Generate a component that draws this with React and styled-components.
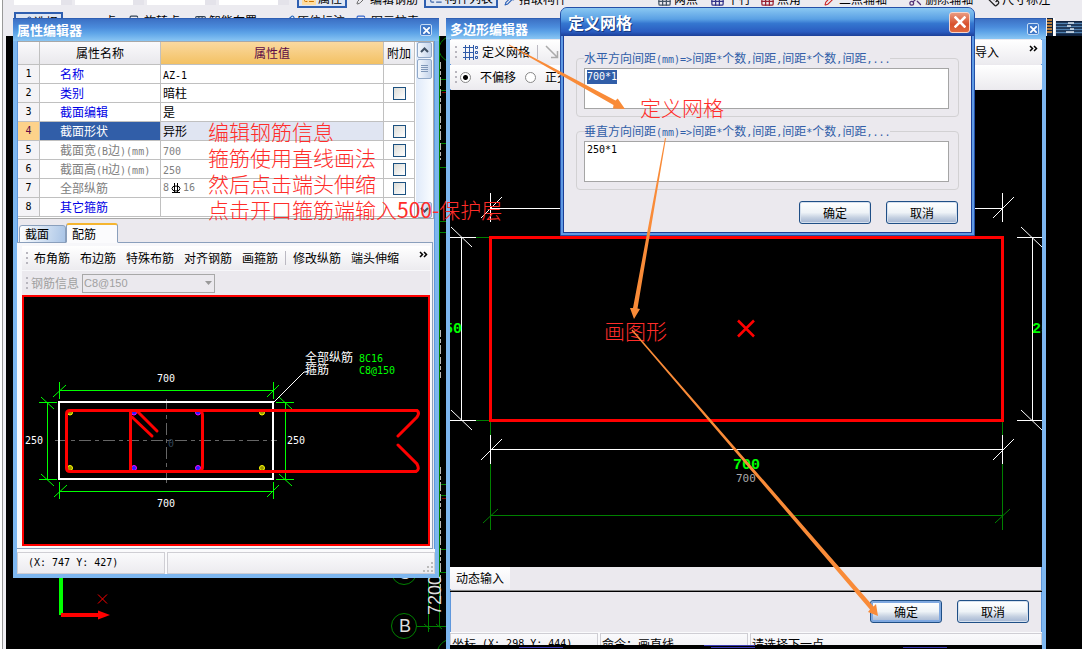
import React, { useEffect, useRef } from "react";
import styled, { createGlobalStyle, css } from "styled-components";
import { Grid3x3, Ruler, Pencil, ListTree, Pipette, Copy, Scissors } from "lucide-react";

const props = [
  { name: "名称", value: "AZ-1" },
  { name: "类别", value: "暗柱", check: true },
  { name: "截面编辑", value: "是" },
  { name: "截面形状", value: "异形", check: true, selected: true },
  { name: "截面宽(B边)(mm)", value: "700", check: true, dim: true },
  { name: "截面高(H边)(mm)", value: "250", check: true, dim: true },
  { name: "全部纵筋", rebar: ["8", "16"], check: true, dim: true },
  { name: "其它箍筋", value: "" },
];

// half-width characters take exactly half of a Chinese character
const Mixed = ({ children }) =>
  children
    .split(/([\x20-\x7e]+)/)
    .filter(Boolean)
    .map((part, i) => (/^[\x20-\x7e]/.test(part) ? <Half key={i}>{part}</Half> : part));

const lines = (list) => list.map((p) => `M${p[0]} ${p[1]}L${p[2]} ${p[3]}`).join("");

const RebarIcon = () => (
  <svg width="12" height="11" viewBox="0 0 12 11" fill="none" stroke="#000">
    <ellipse cx="6" cy="5.5" rx="4" ry="2.5" />
    <path d="M4.5 0v10M7.5 0v10M2 9.5h8" />
  </svg>
);

const MeshIcon = () => (
  <svg width="15" height="15" viewBox="0 0 15 15" fill="none" stroke="#2f5aa8">
    <path d="M2.5 0v15M6.5 0v15M10.5 0v15M0 2.5h11M0 7.5h11M0 12.5h11" />
    <path d="M12.5 1.5h2v2h-2zM12.5 6.5h2v2h-2zM12.5 11.5h2v2h-2z" />
  </svg>
);

const CloseMark = ({ size = 7, width = 2 }) => (
  <svg width={size} height={size} viewBox="0 0 8 8" stroke="#fff" strokeWidth={width} strokeLinecap="square">
    <path d="M1 1l6 6M7 1l-6 6" />
  </svg>
);

const MoreMark = () => (
  <svg width="9" height="7" viewBox="0 0 9 7" fill="none" stroke="#000" strokeWidth="1.5">
    <path d="M1 1l2.5 2.5L1 6M5 1l2.5 2.5L5 6" />
  </svg>
);

const MainToolbar = () => (
  <Toolbars>
    <TopRow>
      <Combo $w={58}>首层</Combo>
      <Combo $w={69}>墙</Combo>
      <Combo $w={69}>暗柱</Combo>
      <Combo $w={70} />
      <Tool $left={5} $on><IconBox $bg="#ffdca0" $color="#d07800"><ListTree size={12} /></IconBox>属性</Tool>
      <Tool $left={3}><Pencil size={12} color="#666" />编辑钢筋</Tool>
      <Tool $on><ListTree size={14} color="#3a63a8" />构件列表</Tool>
      <Tool><Pipette size={13} color="#2c62b8" />拾取构件</Tool>
      <Tool $left={81}><Grid3x3 size={15} color="#456" />两点</Tool>
      <Tool $left={3}><Grid3x3 size={15} color="#338" />平行</Tool>
      <Tool><Grid3x3 size={15} color="#923" />点角</Tool>
      <Tool $left={14}><Pencil size={13} color="#c22" />三点辅轴</Tool>
      <Tool $left={12}><Scissors size={15} color="#537" />删除辅轴</Tool>
      <Tool $left={3}><Ruler size={15} color="#222" />尺寸标注</Tool>
    </TopRow>
    <ToolRow>
      <Tool $on><Pencil size={13} color="#3a63a8" />选择</Tool>
      <Tool $left={38}>点</Tool>
      <Tool $left={7}><Copy size={13} color="#345" />旋转点</Tool>
      <Tool $left={8}><Grid3x3 size={13} color="#345" />智能布置</Tool>
      <Tool $left={19}><Pencil size={13} color="#26b" />原位标注</Tool>
      <Tool $left={5}><Copy size={13} color="#36c" />图元柱表</Tool>
    </ToolRow>
  </Toolbars>
);

const BackDrawing = () => (
  <Drawing>
    <g transform="translate(-6 -36)" fill="none" stroke="#008000">
      <path d="M439.5 36V626M428.5 560V632M417 626.5H447M440 79.5h7M440 90.5h7M440 143.5h7M440 167.5h7M440 221.5h7M440 232.5h7M440 484.5h7M440 495.5h7M440 549.5h7M440 572.5h7" />
      <path d="M447 37q-8 5-8 12t8 12M447 640q-7 3-9 9M424 624l6 5M436 624l6 5" />
      <circle cx="404" cy="626" r="12.5" />
      <circle cx="404" cy="572" r="12.5" />
      <path d="M440.5 62V160M440.5 330V378M440.5 467V600" stroke="#bbb" strokeDasharray="7 2 4 2 9 3" />
      <path d="M442 92.5h4M442 498.5h4" stroke="#800000" />
      <path d="M61 577V615" stroke="#0f0" strokeWidth="4" />
      <path d="M61 615H99" stroke="#f00" strokeWidth="4" />
      <path d="M98 610.5L110 615L98 619.5Z" fill="#f00" stroke="none" />
      <path d="M98 594.5l9 9M107 594.5l-9 9" stroke="#f00" />
      <g fill="#ddd" stroke="none" fontFamily="Liberation Sans, sans-serif" fontSize="18">
        <text x="399" y="632">B</text>
        <text x="398" y="579">C</text>
        <text transform="translate(441 615) rotate(-90)">7200</text>
      </g>
    </g>
  </Drawing>
);

const SectionDrawing = () => (
  <Drawing>
    <g transform="translate(-24 -297)" fill="none">
      <path d="M55 440.5H277M166.5 399V484" stroke="#666" strokeDasharray="12 4 4 4" />
      <text x="168" y="447" fill="#345" fontSize="10">0</text>
      <rect x="59" y="402" width="214" height="77" stroke="#fff" strokeWidth="2" />
      <path
        stroke="#0f0"
        d={lines([
          [59.5, 390.5, 273.5, 390.5], [59.5, 382, 59.5, 399], [273.5, 382, 273.5, 399], [53, 397, 66, 385], [267, 397, 279, 385],
          [59.5, 491.5, 273.5, 491.5], [59.5, 482, 59.5, 499], [273.5, 482, 273.5, 499], [54, 497, 67, 485], [267, 497, 279, 485],
          [47.5, 402, 47.5, 479], [39, 402.5, 57, 402.5], [39, 479.5, 57, 479.5], [41, 397, 54, 409], [41, 474, 54, 486],
          [285.5, 402, 285.5, 479], [276, 402.5, 294, 402.5], [276, 479.5, 294, 479.5], [279, 397, 292, 409], [279, 474, 292, 486],
        ])}
      />
      {[[70, "#ff0", "#990"], [134, "#f0f", "#22f"], [198, "#f0f", "#22f"], [262, "#ff0", "#990"]].map(([x, color, fill]) => (
        <g key={x} stroke={color} fill={fill}>
          <circle cx={x} cy="412.5" r="2.5" />
          <circle cx={x} cy="468" r="2.5" />
        </g>
      ))}
      <g stroke="#f00" strokeWidth="3" strokeLinecap="round">
        <path d="M398 436L417 417Q420 413 417 410.5H70Q66.5 410.5 66.5 414V468Q66.5 471.5 70 471.5H416Q420 470 417 464L398 445" />
        <path d="M130.5 412V470M200 410.5Q202.5 412 202.5 415V467Q202.5 470 200 471M132 417l20 19M137 411l20 20" />
      </g>
      <path d="M274 402L304 372H309" stroke="#fff" />
      <g fill="#fff" fontSize="10">
        <text x="157" y="382">700</text>
        <text x="157" y="507">700</text>
        <text x="25" y="444">250</text>
        <text x="287" y="444">250</text>
        <text x="305" y="362" fontSize="12">全部纵筋</text>
        <text x="305" y="374" fontSize="12">箍筋</text>
        <text x="359" y="362" fill="#0f0">8C16</text>
        <text x="359" y="374" fill="#0f0">C8@150</text>
      </g>
    </g>
  </Drawing>
);

const PolygonDrawing = () => (
  <Drawing>
    <g transform="translate(-450 -90)" fill="none">
      <path
        stroke="#008000"
        d={lines([
          [490.5, 422, 490.5, 530], [1002.5, 422, 1002.5, 530], [490, 515.5, 1002, 515.5],
          [483, 523, 498, 509], [995, 523, 1010, 509], [476, 237.5, 489, 237.5], [476, 420.5, 489, 420.5],
        ])}
      />
      <path
        stroke="#fff"
        d={lines([
          [490, 449.5, 1002, 449.5], [490.5, 435, 490.5, 464], [1002.5, 435, 1002.5, 464], [481, 460, 502, 439], [993, 460, 1014, 439],
          [490, 208.5, 1002, 208.5], [490.5, 193, 490.5, 222], [1002.5, 193, 1002.5, 222], [481, 218, 502, 197], [993, 218, 1014, 197],
          [461.5, 237, 461.5, 420], [450, 237.5, 476, 237.5], [450, 420.5, 476, 420.5], [451, 227, 472, 247], [451, 410, 472, 430],
          [1032.5, 237, 1032.5, 420], [1017, 237.5, 1043, 237.5], [1017, 420.5, 1043, 420.5], [1021, 227, 1042, 247], [1021, 410, 1042, 430],
        ])}
      />
      <rect x="490.5" y="237.5" width="512" height="183" stroke="#f00" strokeWidth="3" />
      <path d="M738 320.5l16 16M754 320.5l-16 16" stroke="#f00" strokeWidth="2.5" />
      <g fill="#0f0" fontSize="15" fontWeight="bold" fontFamily="Liberation Mono, monospace">
        <text x="733" y="469">700</text>
        <text x="435" y="333">250</text>
        <text x="1032" y="333">250</text>
      </g>
      <text x="736" y="482" fill="#aaa" fontSize="11">700</text>
    </g>
  </Drawing>
);

const PropertyWindow = () => (
  <Window $left={13} $width={426}>
    <TitleBar $h={23}>
      属性编辑器
      <SmallClose aria-label="关闭"><CloseMark /></SmallClose>
    </TitleBar>
    <TableArea>
      <PropTable>
        <colgroup>
          <col width="22" />
          <col width="121" />
          <col />
          <col width="31" />
        </colgroup>
        <thead>
          <tr>
            <Head />
            <Head>属性名称</Head>
            <Head $active>属性值</Head>
            <Head>附加</Head>
          </tr>
        </thead>
        <tbody>
          {props.map((row, i) => (
            <tr key={row.name}>
              <NumCell $on={row.selected}>{i + 1}</NumCell>
              <NameCell $on={row.selected} $dim={row.dim}><Mixed>{row.name}</Mixed></NameCell>
              <ValueCell $on={row.selected} $dim={row.dim}>
                {row.rebar ? (
                  <Rebar><Half>{row.rebar[0]}</Half><RebarIcon /><Half>{row.rebar[1]}</Half></Rebar>
                ) : (
                  <Mixed>{row.value}</Mixed>
                )}
              </ValueCell>
              <CheckCell>{row.check && <Check type="checkbox" aria-label={`附加 ${row.name}`} />}</CheckCell>
            </tr>
          ))}
        </tbody>
      </PropTable>
      <ScrollTrack>
        <ScrollButton $h={16} aria-label="向上">
          <svg width="9" height="6" viewBox="0 0 9 6" fill="none" stroke="#3f5064" strokeWidth="2"><path d="M1 5l3.5-3.5L8 5" /></svg>
        </ScrollButton>
        <ScrollButton $h={20} aria-label="滚动块">
          <svg width="7" height="8" viewBox="0 0 7 8" stroke="#7f97b8"><path d="M0 .5h7M0 2.5h7M0 4.5h7M0 6.5h7" /></svg>
        </ScrollButton>
        <Spacer />
        <ScrollButton $h={16} aria-label="向下">
          <svg width="9" height="6" viewBox="0 0 9 6" fill="none" stroke="#3f5064" strokeWidth="2"><path d="M1 1l3.5 3.5L8 1" /></svg>
        </ScrollButton>
      </ScrollTrack>
    </TableArea>
    <Tabs>
      <Tab>截面</Tab>
      <Tab $on>配筋</Tab>
    </Tabs>
    <TabPanel>
      <Bar>
        <Grip />
        <BarButton>布角筋</BarButton>
        <BarButton>布边筋</BarButton>
        <BarButton>特殊布筋</BarButton>
        <BarButton>对齐钢筋</BarButton>
        <BarButton>画箍筋</BarButton>
        <Divider />
        <BarButton>修改纵筋</BarButton>
        <BarButton>端头伸缩</BarButton>
        <Spacer />
        <More aria-label="更多"><MoreMark /></More>
      </Bar>
      <InfoBar>
        <Grip />
        <InfoLabel htmlFor="rebar">钢筋信息</InfoLabel>
        <SelectBox>
          <InfoSelect id="rebar" disabled>
            <option>C8@150</option>
          </InfoSelect>
          <svg width="7" height="4" viewBox="0 0 7 4"><path d="M0 0h7L3.500 4z" fill="#999" /></svg>
        </SelectBox>
      </InfoBar>
      <Preview><SectionDrawing /></Preview>
    </TabPanel>
    <StatusBar>
      <StatusCell $w={148} $pad={10}><Mixed>(X: 747 Y: 427)</Mixed></StatusCell>
      <StatusCell $end>
        <svg width="12" height="12" viewBox="0 0 12 12" fill="#bbb">
          <path d="M9 1h2v2H9zM9 5h2v2H9zM9 9h2v2H9zM5 5h2v2H5zM5 9h2v2H5zM1 9h2v2H1z" />
        </svg>
      </StatusCell>
    </StatusBar>
  </Window>
);

const EditorWindow = () => (
  <Window $left={446} $right={36} $fill>
    <TitleBar $h={21}>
      多边形编辑器
      <SmallClose aria-label="关闭"><CloseMark /></SmallClose>
    </TitleBar>
    <EditorBar>
      <Grip />
      <MeshButton><MeshIcon />定义网格</MeshButton>
      <Divider />
      <svg width="14" height="14" viewBox="0 0 14 14" fill="none" stroke="#aaa" strokeWidth="1.5">
        <path d="M1 1l11 11M12.500 6v6.500H6" />
      </svg>
      <Spacer />
      <BarButton>导入</BarButton>
      <EditorMore aria-label="更多"><MoreMark /></EditorMore>
    </EditorBar>
    <OffsetBar>
      <Grip />
      <RadioLabel><Radio type="radio" name="offset" defaultChecked />不偏移</RadioLabel>
      <RadioLabel><Radio type="radio" name="offset" />正交偏移</RadioLabel>
    </OffsetBar>
    <EditorCanvas><PolygonDrawing /></EditorCanvas>
    <InputBar><InputToggle>动态输入</InputToggle></InputBar>
    <Footer>
      <Push $primary>确定</Push>
      <Push>取消</Push>
    </Footer>
    <CutStatus>
      <StatusCell $w={148} $pad={1}><Mixed>坐标 (X: 298 Y: 444)</Mixed></StatusCell>
      <StatusCell $w={148} $pad={1}>命令：画直线</StatusCell>
      <StatusCell $pad={1}>请选择下一点</StatusCell>
    </CutStatus>
    <Bottom>
      <svg width="100%" height="4" stroke="#3838b0">
        <path d="M69 2.500h44M254 .5h51M261 2.500h44M453 2.500h44" />
      </svg>
    </Bottom>
  </Window>
);

const GridDialog = () => {
  const first = useRef(null);

  useEffect(() => {
    first.current.focus();
    first.current.select();
  }, []);

  return (
    <Dialog role="dialog" aria-labelledby="grid-title">
      <DialogTitle>
        <span id="grid-title">定义网格</span>
        <RedClose aria-label="关闭"><CloseMark size={12} width={1.7} /></RedClose>
      </DialogTitle>
      <DialogBody>
        <Field>
          <legend id="hor"><Mixed>水平方向间距(mm)=&gt;间距*个数,间距,间距*个数,间距,...</Mixed></legend>
          <Area ref={first} aria-labelledby="hor" defaultValue="700*1" spellCheck={false} />
        </Field>
        <Field>
          <legend id="ver"><Mixed>垂直方向间距(mm)=&gt;间距*个数,间距,间距*个数,间距,...</Mixed></legend>
          <Area aria-labelledby="ver" defaultValue="250*1" spellCheck={false} />
        </Field>
        <DialogButtons>
          <Push>确定</Push>
          <Push>取消</Push>
        </DialogButtons>
      </DialogBody>
    </Dialog>
  );
};

const Notes = () => (
  <NoteLayer>
    <g fill="#ff2d2a" fontSize="21">
      <text x="208" y="140">编辑钢筋信息</text>
      <text x="208" y="166">箍筋使用直线画法</text>
      <text x="208" y="192">然后点击端头伸缩</text>
      <text x="208" y="218">点击开口箍筋端输入<tspan fontWeight="400">500-</tspan>保护层</text>
      <text x="640" y="116">定义网格</text>
      <text x="604" y="339">画图形</text>
    </g>
    <g fill="#f98b38">
      <path d="M509 44.500L615.500 100.500L617.700 98.500L625 109L613 108.500L613.500 105L509 45.500Z" />
      <path d="M665 138L666 138L637.500 308.500L640 309L634 319L630 308L633 308Z" />
      <path d="M631.500 330.500L632.500 329.500L873.500 606.500L876 604L878 616L868 612L870 609.500Z" />
    </g>
  </NoteLayer>
);

const App = () => (
  <Desktop>
    <GlobalStyle />
    <MainToolbar />
    <Work>
      <Rail />
      <WorkCanvas><BackDrawing /></WorkCanvas>
    </Work>
    <DesktopScrap width="36" height="18" viewBox="0 0 36 18">
      <path d="M1 0h6v18H1zM10 3h26v15H10z" fill="#10233f" />
      <path d="M1 2h5M1 5h5M1 8h5M1 11h5M1 14h5" stroke="#f0a040" strokeWidth="1.500" />
      <path d="M10 5.500h26M10 8.500h26M10 11.500h26M10 14.500h26" stroke="#4f80b0" strokeWidth="1.500" />
      <path d="M22 5h6M21 8h4M24 11h4M20 14h8" stroke="#dde6f0" strokeWidth="1.500" />
      <path d="M8 0v18" stroke="#fff" strokeWidth="2" />
    </DesktopScrap>
    <EditorWindow />
    <PropertyWindow />
    <GridDialog />
    <Notes />
  </Desktop>
);

export default App;

const GlobalStyle = createGlobalStyle`
  body {
    margin: 0;
    background: #000;
  }
  *, *::before, *::after {
    box-sizing: border-box;
  }
  button, input, select, textarea {
    font: inherit;
    color: inherit;
    margin: 0;
    padding: 0;
  }
  svg {
    flex: none;
  }
`;

const Desktop = styled.div`
  position: relative;
  display: flex;
  flex-direction: column;
  height: 100vh;
  overflow: hidden;
  background: #000;
  color: #000;
  font: 12px/14px "Noto Sans CJK SC", sans-serif;
`;

const Half = styled.span`
  font-family: "DejaVu Sans Mono", monospace;
  font-size: 10px;
  line-height: 1;
  white-space: pre;
`;

const Toolbars = styled.div`
  height: 36px;
  flex: none;
  padding-left: 12px;
  overflow: hidden;
  border-left: 2px solid #fff;
  background: #ecebf0;
  box-shadow: inset 1px 0 #999;
`;

const ToolRow = styled.div`
  display: flex;
  align-items: flex-start;
  white-space: nowrap;
`;

const TopRow = styled(ToolRow)`
  height: 8px;
  align-items: flex-end;
  gap: 3px;
  margin-bottom: 4px;
`;

const Combo = styled.div`
  width: ${(p) => p.$w}px;
  height: 19px;
  flex: none;
  margin-bottom: 3px;
  padding-left: 5px;
  background: #fff;
  border-right: 11px solid #e4e3ea;
`;

const Tool = styled.button`
  display: flex;
  align-items: center;
  gap: 2px;
  flex: none;
  height: ${(p) => (p.$on ? 20 : 18)}px;
  margin-left: ${(p) => p.$left || 0}px;
  padding: 0 3px;
  border: ${(p) => (p.$on ? "2px solid #2f5fb0" : "0")};
  background: ${(p) => (p.$on ? "#dfe6f3" : "none")};
`;

const IconBox = styled.span`
  display: flex;
  padding: 1px;
  background: ${(p) => p.$bg};
  color: ${(p) => p.$color};
`;

const Work = styled.div`
  flex: 1;
  display: flex;
`;

const Rail = styled.div`
  width: 6px;
  background: #f1f0f4;
  border-left: 2px solid #fff;
  box-shadow: inset 1px 0 #999;
`;

const WorkCanvas = styled.div`
  flex: 1;
  background: #000;
`;

const Drawing = styled.svg`
  display: block;
  width: 100%;
  height: 100%;
  overflow: hidden;
  font-family: "DejaVu Sans Mono", "Noto Sans CJK SC", monospace;
`;

const DesktopScrap = styled.svg`
  position: absolute;
  top: 18px;
  right: 0;
`;

const Window = styled.section`
  position: absolute;
  top: 18px;
  left: ${(p) => p.$left}px;
  display: flex;
  flex-direction: column;
  border: solid #7db6ef;
  border-width: 0 4px 4px;
  background: #ebe9ee;
  box-shadow: inset 0 0 0 1px #5f97dc;
  ${(p) => (p.$fill
    ? css`right: ${p.$right}px; bottom: 0; border-bottom: 0;`
    : css`width: ${p.$width}px;`)}
`;

const TitleBar = styled.header`
  display: flex;
  align-items: center;
  justify-content: space-between;
  height: ${(p) => p.$h}px;
  flex: none;
  margin: 0 -4px;
  padding: 0 7px 0 4px;
  border-top: 1px solid #2f5fb3;
  background: linear-gradient(#3c70c4, #4b8cdc 40%, #5fa5e8 65%, #8ac6f3);
  color: #fff;
  font-size: 13px;
  font-weight: bold;
`;

const SmallClose = styled.button`
  display: grid;
  place-items: center;
  width: 12px;
  height: 12px;
  border: 1px solid #c6dcf5;
  border-radius: 2px;
  background: #3f78c8;
`;

const TableArea = styled.div`
  display: flex;
  margin: 0 1px;
  height: 178px;
  border: 1px solid #a8a8a8;
  border-width: 1px 1px 1px 0;
  background: #fff;
`;

const PropTable = styled.table`
  flex: 1;
  table-layout: fixed;
  border-spacing: 0;
  height: 175px;
`;

const cell = css`
  height: 19px;
  padding: 0;
  border: solid #c0c0c0;
  border-width: 0 1px 1px 0;
  overflow: hidden;
  white-space: nowrap;
`;

const Head = styled.th`
  ${cell}
  height: 23px;
  font-weight: normal;
  color: ${(p) => (p.$active ? "#5c0a46" : "#000")};
  background: ${(p) => (p.$active ? "linear-gradient(#fad9a0, #f3c163)" : "linear-gradient(#fafafc, #e9e8ec)")};
`;

const NumCell = styled.td`
  ${cell}
  text-align: center;
  font-family: "DejaVu Sans Mono", monospace;
  font-size: 10px;
  color: ${(p) => (p.$on ? "#5c0a46" : "#000")};
  background: ${(p) => (p.$on ? "#fdd28a" : "#f4f3f6")};
`;

const NameCell = styled.td`
  ${cell}
  padding-left: 20px;
  color: ${(p) => (p.$on ? "#fff" : p.$dim ? "#808080" : "#0000e6")};
  background: ${(p) => (p.$on ? "#315ea8" : "#fff")};
`;

const ValueCell = styled.td`
  ${cell}
  padding-left: 2px;
  color: ${(p) => (p.$dim ? "#808080" : "#000")};
  background: ${(p) => (p.$on ? "#e0e5f2" : "#fff")};
`;

const CheckCell = styled.td`
  ${cell}
  text-align: center;
`;

const Rebar = styled.span`
  display: flex;
  align-items: center;
  gap: 1px;
`;

const Check = styled.input`
  appearance: none;
  display: block;
  width: 13px;
  height: 13px;
  margin: 0 auto;
  border: 1px solid #1c5180;
  background: linear-gradient(135deg, #dcdcd7, #fff);
`;

const ScrollTrack = styled.div`
  display: flex;
  flex-direction: column;
  gap: 1px;
  width: 17px;
  margin-left: 1px;
  padding: 0 1px;
  background: linear-gradient(90deg, #dfeafa, #fbfdff);
`;

const ScrollButton = styled.button`
  display: grid;
  place-items: center;
  height: ${(p) => p.$h}px;
  border: 1px solid #90a8c8;
  border-radius: 2px;
  background: linear-gradient(90deg, #f4f8fd, #c3d3ea);
`;

const Spacer = styled.div`
  flex: 1;
`;

const Tabs = styled.div`
  display: flex;
  align-items: flex-end;
  height: 24px;
  padding-left: 2px;
  position: relative;
  margin-bottom: -1px;
`;

const Tab = styled.button`
  height: ${(p) => (p.$on ? 20 : 18)}px;
  padding: ${(p) => (p.$on ? "0 21px 0 5px" : "0 16px 0 5px")};
  border: 1px solid #8a9fbc;
  border-top: ${(p) => (p.$on ? "2px solid #f5b530" : "1px solid #8a9fbc")};
  border-bottom-color: ${(p) => (p.$on ? "#fbfbfd" : "#8a9fbc")};
  border-radius: 3px 3px 0 0;
  background: ${(p) => (p.$on ? "#fbfbfd" : "linear-gradient(100deg, #fff, #a9c4e6)")};
  line-height: 16px;
`;

const TabPanel = styled.div`
  margin-right: 2px;
  padding: 3px 2px 2px 5px;
  border: 1px solid #8a9fbc;
  border-left: 0;
  background: #f7f7fa;
`;

const Bar = styled.div`
  display: flex;
  align-items: center;
  gap: 10px;
  height: 24px;
  padding-left: 4px;
  background: linear-gradient(#fff, #ecebef);
`;

const InfoBar = styled(Bar)`
  gap: 3px;
  margin: 1px 0 0;
  background: #ebe9ee;
`;

const Grip = styled.i`
  width: 2px;
  height: 12px;
  flex: none;
  margin-right: -4px;
  background: repeating-linear-gradient(#b8b6be 0 2px, transparent 2px 5px);

  ${InfoBar} & {
    margin-right: 0;
  }
`;

const BarButton = styled.button`
  border: 0;
  background: none;
  white-space: nowrap;
`;

const Divider = styled.i`
  width: 1px;
  height: 14px;
  flex: none;
  margin: 0 -3px;
  background: #bbb9c2;
`;

const More = styled(BarButton)`
  align-self: flex-start;
  margin-right: 4px;
`;

const EditorMore = styled(More)`
  margin-left: 20px;
`;

const InfoLabel = styled.label`
  color: #a0a0a0;
`;

const SelectBox = styled.div`
  display: flex;
  align-items: center;
  width: 133px;
  height: 19px;
  padding-right: 2px;
  border: 1px solid #a8a8a8;
`;

const InfoSelect = styled.select`
  appearance: none;
  flex: 1;
  padding-left: 1px;
  border: 0;
  background: none;
  color: #a0a0a0;
  font-size: 11px;
  font-family: "Liberation Sans", sans-serif;
  opacity: 1;
`;

const Preview = styled.div`
  height: 251px;
  border: 2px solid #f00;
  background: #000;
`;

const StatusBar = styled.footer`
  display: flex;
  gap: 2px;
  flex: none;
  height: 25px;
  padding-top: 3px;
  background: #fafafc;
`;

const StatusCell = styled.div`
  display: flex;
  align-items: ${(p) => (p.$end ? "flex-end" : "center")};
  justify-content: ${(p) => (p.$end ? "flex-end" : "flex-start")};
  flex: ${(p) => (p.$w ? "none" : 1)};
  width: ${(p) => (p.$w ? `${p.$w}px` : "auto")};
  height: 22px;
  padding-left: ${(p) => p.$pad || 0}px;
  border: 1px solid #cfced4;
  background: linear-gradient(#fafafc, #ecebef);
`;

const EditorBar = styled(Bar)`
  flex: none;
  height: 24px;
  margin-top: 1px;
  padding-left: 5px;
`;

const OffsetBar = styled(EditorBar)`
  margin-bottom: 1px;
  gap: 9px;

  ${Grip} {
    margin-right: -6px;
  }
`;

const MeshButton = styled(BarButton)`
  display: flex;
  align-items: center;
  gap: 4px;
`;

const RadioLabel = styled.label`
  display: flex;
  align-items: center;
  gap: 9px;
`;

const Radio = styled.input`
  appearance: none;
  width: 11px;
  height: 11px;
  border: 1px solid #888;
  border-radius: 50%;
  background: #fff;

  &:checked {
    background: radial-gradient(#000 0 2px, #fff 3px);
  }
`;

const EditorCanvas = styled.div`
  flex: 1;
  min-height: 0;
  background: #000;
`;

const InputBar = styled.div`
  height: 24px;
  flex: none;
  border-bottom: 1px solid #888;
`;

const InputToggle = styled.button`
  height: 22px;
  padding: 0 6px;
  border: 0;
  background: linear-gradient(#fff, #f1f0f4);
`;

const Footer = styled.div`
  display: flex;
  justify-content: flex-end;
  gap: 15px;
  height: 41px;
  flex: none;
  padding: 8px 13px 0;
  border-top: 1px solid #000;
`;

const Push = styled.button`
  width: 72px;
  height: 23px;
  border: 1px solid #1f4f86;
  border-radius: 3px;
  background: linear-gradient(#fff, #eef3f7 50%, #c3cfe0 75%, #a3b5d2);
  box-shadow: ${(p) => (p.$primary ? "inset 0 0 0 2px #7fa8e0" : "inset 0 0 0 1px #d5e0ee")};
`;

const CutStatus = styled(StatusBar)`
  height: 13px;
  padding-top: 1px;
  overflow: hidden;
`;

const Bottom = styled.div`
  height: 4px;
  flex: none;
  background: #000;

  svg {
    display: block;
  }
`;

const Dialog = styled.section`
  position: absolute;
  top: 7px;
  left: 560px;
  width: 415px;
  padding: 0 2px 2px;
  border: 1px solid #2450a8;
  border-radius: 7px 7px 0 0;
  background: #5f9ae4;
`;

const DialogTitle = styled.header`
  display: flex;
  align-items: center;
  justify-content: space-between;
  height: 28px;
  margin: 0 -2px;
  padding: 0 4px 0 7px;
  border-radius: 6px 6px 0 0;
  background: linear-gradient(#8ac8f2, #5aa0e4 40%, #3577d0 55%, #2a5cc0 85%, #1c3f97);
  color: #fff;
  font-size: 16px;
  font-weight: bold;
  line-height: 20px;
  text-shadow: 1px 1px #173a80;
`;

const RedClose = styled.button`
  display: grid;
  place-items: center;
  width: 21px;
  height: 21px;
  border: 1px solid #f6d5cc;
  border-radius: 3px;
  background: linear-gradient(#e99a80, #d8502c 60%, #e06a40);
`;

const DialogBody = styled.div`
  padding: 15px 12px 8px;
  border: 1px solid #1c3f97;
  border-top: 0;
  background: #ebe9ee;
`;

const Field = styled.fieldset`
  min-width: 0;
  margin: 0 0 7px;
  padding: 3px 9px 7px 7px;
  border: 1px solid #d2d1d3;
  border-radius: 4px;
  color: #315ea8;

  legend {
    height: 14px;
    padding: 0;
    white-space: nowrap;
  }
`;

const Area = styled.textarea`
  display: block;
  width: 100%;
  height: 41px;
  padding: 1px 2px;
  border: 1px solid #a5a5a5;
  outline: none;
  resize: none;
  background: #fff;
  color: #000;
  font: 10px/14px "DejaVu Sans Mono", monospace;

  &::selection {
    background: #315ea8;
    color: #fff;
  }
`;

const DialogButtons = styled.div`
  display: flex;
  justify-content: flex-end;
  gap: 15px;
  padding: 4px 1px 0 0;
`;

const NoteLayer = styled.svg`
  position: absolute;
  inset: 0;
  width: 100%;
  height: 100%;
  pointer-events: none;
  font-family: "Noto Sans CJK SC", sans-serif;
  font-weight: 300;
`;
